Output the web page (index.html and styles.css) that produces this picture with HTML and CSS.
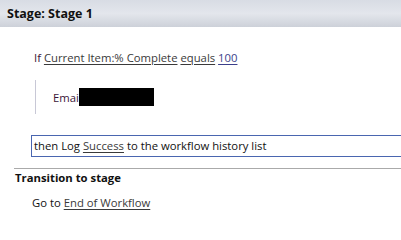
FILE: index.html
```html
<!DOCTYPE html>
<html>
<head>
<meta charset="utf-8">
<link rel="stylesheet" href="styles.css">
</head>
<body>
<div class="header">Stage: Stage 1</div>
<div class="stage">
  <div class="cond"><span class="kw">If</span> <a class="lnk">Current Item:% Complete</a> <a class="lnk">equals</a> <a class="lnk num">100</a></div>
  <div class="actions">
    <div class="email"><span class="kw">Emai</span><span class="redact"></span></div>
  </div>
  <div class="log">then Log <a class="lnk">Success</a> to the workflow history list</div>
</div>
<div class="transition">
  <div class="ttitle">Transition to stage</div>
  <div class="goto">Go to <a class="lnk">End of Workflow</a></div>
</div>
</body>
</html>
```
FILE: styles.css
```css
html, body {
  margin: 0;
  padding: 0;
  background: #ffffff;
}
body {
  font-family: "Open Sans", "Noto Sans", sans-serif;
  font-size: 11.3px;
  color: #1e1e1e;
  width: 401px;
  height: 220px;
  overflow: hidden;
}
.header {
  height: 27px;
  line-height: 27px;
  padding-left: 7px;
  font-weight: bold;
  font-size: 12.5px;
  color: #111;
  background: linear-gradient(to bottom, #d8dce4 0%, #e3e6ec 50%, #cdd1d9 100%);
}
.stage {
  display: flex;
  flex-direction: column;
}
.cond {
  margin-top: 23px;
  padding-left: 34px;
  line-height: 16px;
  height: 16px;
}
.kw {
  color: #3c1538;
}
.lnk {
  color: #3a3a3a;
  text-decoration: underline;
  text-underline-offset: 2px;
}
.num {
  color: #3b3f8a;
}
.actions {
  margin-top: 14px;
  margin-left: 35px;
  height: 34px;
  border-left: 1px solid #c8c8d6;
  display: flex;
  align-items: center;
  padding-left: 17px;
}
.email {
  display: flex;
  align-items: center;
}
.redact {
  display: inline-block;
  width: 75px;
  height: 18px;
  background: #000;
}
.log {
  margin-top: 21px;
  margin-left: 31px;
  height: 20px;
  line-height: 20px;
  border: 1px solid #4a66b0;
  border-right: none;
  padding-left: 2px;
  color: #111;
}
.transition {
  margin-top: 11px;
  margin-left: 14px;
  border-top: 1px solid #aaaaaa;
}
.ttitle {
  font-weight: bold;
  padding-left: 1px;
  line-height: 18px;
  height: 18px;
  color: #111;
}
.goto {
  margin-top: 8px;
  padding-left: 18px;
  line-height: 16px;
  color: #111;
}
```
